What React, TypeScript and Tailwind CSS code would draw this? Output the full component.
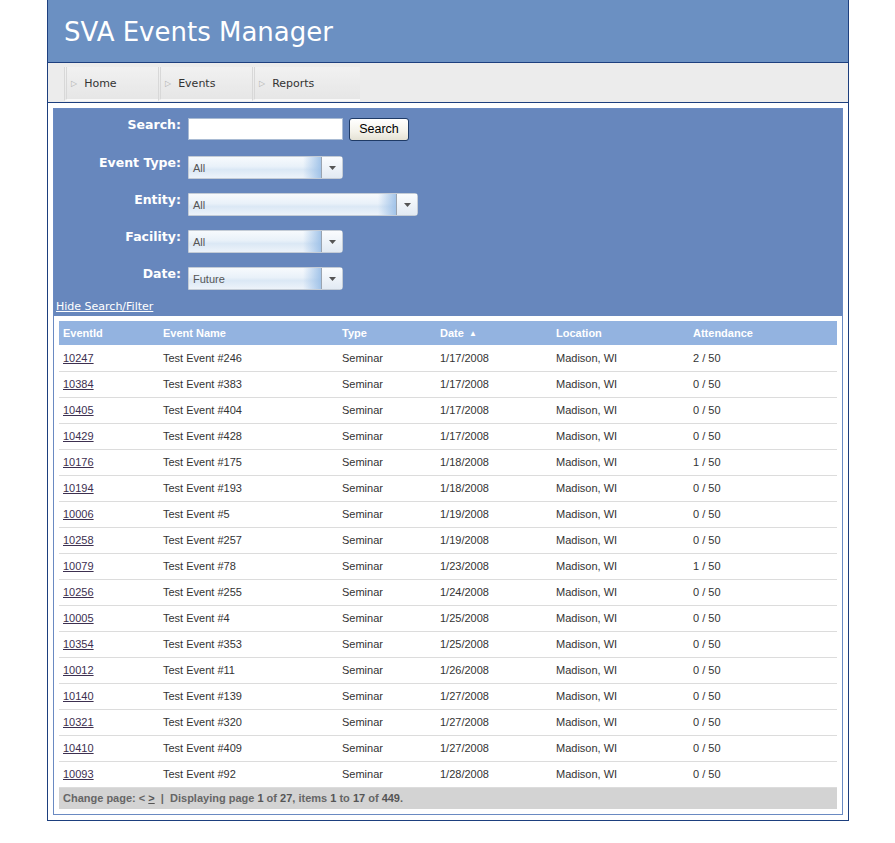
import React from "react";

type EventRow = {
  id: string;
  name: string;
  type: string;
  date: string;
  location: string;
  attendance: string;
};

const events: EventRow[] = [
  { id: "10247", name: "Test Event #246", type: "Seminar", date: "1/17/2008", location: "Madison, WI", attendance: "2 / 50" },
  { id: "10384", name: "Test Event #383", type: "Seminar", date: "1/17/2008", location: "Madison, WI", attendance: "0 / 50" },
  { id: "10405", name: "Test Event #404", type: "Seminar", date: "1/17/2008", location: "Madison, WI", attendance: "0 / 50" },
  { id: "10429", name: "Test Event #428", type: "Seminar", date: "1/17/2008", location: "Madison, WI", attendance: "0 / 50" },
  { id: "10176", name: "Test Event #175", type: "Seminar", date: "1/18/2008", location: "Madison, WI", attendance: "1 / 50" },
  { id: "10194", name: "Test Event #193", type: "Seminar", date: "1/18/2008", location: "Madison, WI", attendance: "0 / 50" },
  { id: "10006", name: "Test Event #5", type: "Seminar", date: "1/19/2008", location: "Madison, WI", attendance: "0 / 50" },
  { id: "10258", name: "Test Event #257", type: "Seminar", date: "1/19/2008", location: "Madison, WI", attendance: "0 / 50" },
  { id: "10079", name: "Test Event #78", type: "Seminar", date: "1/23/2008", location: "Madison, WI", attendance: "1 / 50" },
  { id: "10256", name: "Test Event #255", type: "Seminar", date: "1/24/2008", location: "Madison, WI", attendance: "0 / 50" },
  { id: "10005", name: "Test Event #4", type: "Seminar", date: "1/25/2008", location: "Madison, WI", attendance: "0 / 50" },
  { id: "10354", name: "Test Event #353", type: "Seminar", date: "1/25/2008", location: "Madison, WI", attendance: "0 / 50" },
  { id: "10012", name: "Test Event #11", type: "Seminar", date: "1/26/2008", location: "Madison, WI", attendance: "0 / 50" },
  { id: "10140", name: "Test Event #139", type: "Seminar", date: "1/27/2008", location: "Madison, WI", attendance: "0 / 50" },
  { id: "10321", name: "Test Event #320", type: "Seminar", date: "1/27/2008", location: "Madison, WI", attendance: "0 / 50" },
  { id: "10410", name: "Test Event #409", type: "Seminar", date: "1/27/2008", location: "Madison, WI", attendance: "0 / 50" },
  { id: "10093", name: "Test Event #92", type: "Seminar", date: "1/28/2008", location: "Madison, WI", attendance: "0 / 50" },
];

const navItems = [
  { label: "Home", width: "w-[94px]" },
  { label: "Events", width: "w-[94px]" },
  { label: "Reports", width: "w-[108px]" },
];

function FakeSelect({ value, wide }: { value: string; wide?: boolean }) {
  return (
    <div
      className={`flex h-[23px] ${wide ? "w-[230px]" : "w-[155px]"} rounded-r-[3px] border border-[#c4ccd6] bg-[linear-gradient(to_bottom,#f7fafd_0%,#e9f1f9_45%,#dbe8f5_60%,#edf3fa_100%)]`}
    >
      <div className="relative flex flex-1 items-center pl-[4px] pt-[2px] text-[11px] text-[#555] font-['Liberation_Sans',Arial,sans-serif]">
        <span className="relative z-10">{value}</span>
        <div className="absolute inset-y-0 right-0 w-[18px] bg-[linear-gradient(to_right,rgba(170,200,235,0),rgba(150,188,230,0.85))]" />
      </div>
      <div className="flex w-[21px] items-center justify-center border-l border-[#9aa4b0] bg-[linear-gradient(to_bottom,#fafcfe,#e2eaf3)]">
        <svg width="7" height="4" viewBox="0 0 7 4">
          <path d="M0 0 H7 L3.5 4 Z" fill="#555" />
        </svg>
      </div>
    </div>
  );
}

function FilterRow({
  label,
  className,
  children,
}: {
  label: string;
  className: string;
  children: React.ReactNode;
}) {
  return (
    <div className={`flex items-start ${className}`}>
      <div className="w-[127px] -mt-[1px] mr-[7px] text-right text-[12.5px] leading-[15px] font-bold text-white font-['DejaVu_Sans',Verdana,sans-serif]">
        {label}
      </div>
      {children}
    </div>
  );
}

export default function App() {
  return (
    <div className="min-h-[843px] bg-white">
      <div className="ml-[47px] w-[802px] border-x border-b border-[#1d3f7e]">
        {/* header */}
        <div className="h-[63px] border-b border-[#1d3f7e] bg-[#6b90c2] pl-[16px] pt-[19px]">
          <h1 className="text-[26px] leading-[26px] text-white font-['DejaVu_Sans',Verdana,sans-serif]">
            SVA Events Manager
          </h1>
        </div>

        {/* nav */}
        <div className="flex h-[40px] border-b border-[#1d3f7e] bg-[#ececec] pl-[16px] pt-[4px]">
          {navItems.map((item) => (
            <div
              key={item.label}
              className={`${item.width} flex h-[34px] items-center border-l-[3px] border-double border-l-[#d8d8d8] border-b-2 border-b-[#f8f8f8] bg-[linear-gradient(to_bottom,#f1f1f1,#e6e6e6)] pl-[4px] pt-[2px] text-[11px] text-[#333] font-['DejaVu_Sans',Verdana,sans-serif]`}
            >
              <span className="mr-[7px] text-[8px] text-[#b0b0b0]">▷</span>
              {item.label}
            </div>
          ))}
        </div>

        {/* content */}
        <div className="p-[5px]">
          <div className="border border-[#6a8ac2]">
            {/* search / filter */}
            <div className="bg-[#6787bd] pt-[9px] pb-[2px]">
              <FilterRow label="Search:" className="h-[22px]">
                <input
                  className="h-[22px] w-[155px] border border-[#a9bbd3] bg-white outline-none"
                  defaultValue=""
                />
                <button className="ml-[6px] h-[23px] w-[60px] rounded-[3px] border border-[#1e3a66] bg-[linear-gradient(to_bottom,#ffffff,#f4f2ea_60%,#e5e2d5)] text-[12.5px] text-black font-['Liberation_Sans',Arial,sans-serif]">
                  Search
                </button>
              </FilterRow>
              <FilterRow label="Event Type:" className="mt-[16px]">
                <FakeSelect value="All" />
              </FilterRow>
              <FilterRow label="Entity:" className="mt-[14px]">
                <FakeSelect value="All" wide />
              </FilterRow>
              <FilterRow label="Facility:" className="mt-[14px]">
                <FakeSelect value="All" />
              </FilterRow>
              <FilterRow label="Date:" className="mt-[14px]">
                <FakeSelect value="Future" />
              </FilterRow>
              <a
                href="#"
                className="mt-[10px] ml-[2px] block text-[11px] leading-[14px] text-white underline font-['DejaVu_Sans',Verdana,sans-serif]"
              >
                Hide Search/Filter
              </a>
            </div>

            {/* grid */}
            <div className="bg-white p-[5px]">
              <table className="w-full table-fixed border-collapse text-left text-[11px] font-['Liberation_Sans',Arial,sans-serif]">
                <thead>
                  <tr className="h-[24px] bg-[#93b3e0] text-white">
                    <th className="w-[100px] pl-[4px] font-bold">EventId</th>
                    <th className="w-[179px] pl-[4px] font-bold">Event Name</th>
                    <th className="w-[98px] pl-[4px] font-bold">Type</th>
                    <th className="w-[116px] pl-[4px] font-bold">
                      Date <span className="ml-[2px] text-[8px] align-[1px]">▲</span>
                    </th>
                    <th className="w-[137px] pl-[4px] font-bold">Location</th>
                    <th className="pl-[4px] font-bold">Attendance</th>
                  </tr>
                </thead>
                <tbody className="text-[#333]">
                  {events.map((ev) => (
                    <tr key={ev.id} className="h-[26px] border-b border-[#dcdcdc]">
                      <td className="pl-[4px]">
                        <a href="#" className="text-[#3d3050] underline">
                          {ev.id}
                        </a>
                      </td>
                      <td className="pl-[4px]">{ev.name}</td>
                      <td className="pl-[4px]">{ev.type}</td>
                      <td className="pl-[4px]">{ev.date}</td>
                      <td className="pl-[4px]">{ev.location}</td>
                      <td className="pl-[4px]">{ev.attendance}</td>
                    </tr>
                  ))}
                  <tr className="h-[22px] bg-[#d3d3d3]">
                    <td colSpan={6} className="pl-[4px] font-bold text-[#666]">
                      Change page: &lt;{" "}
                      <a href="#" className="text-[#555] underline">
                        &gt;
                      </a>{" "}
                      &nbsp;|&nbsp; Displaying page <span className="text-[#555]">1</span> of{" "}
                      <span className="text-[#555]">27</span>, items <span className="text-[#555]">1</span> to{" "}
                      <span className="text-[#555]">17</span> of <span className="text-[#555]">449</span>.
                    </td>
                  </tr>
                </tbody>
              </table>
            </div>
          </div>
        </div>
      </div>
    </div>
  );
}
